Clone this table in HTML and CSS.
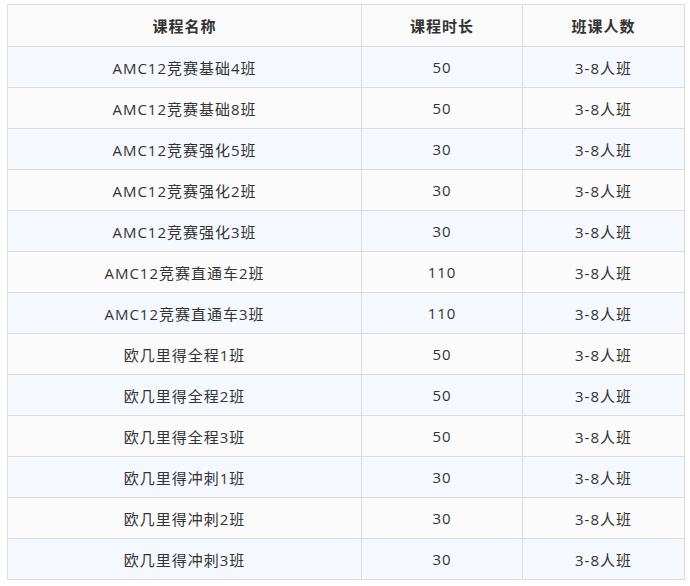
FILE: index.html
```html
<!DOCTYPE html>
<html lang="zh">
<head>
<meta charset="utf-8">
<link rel="stylesheet" href="styles.css">
</head>
<body>
<table class="course-table">
  <thead>
    <tr><th class="col-name">课程名称</th><th class="col-len">课程时长</th><th class="col-size">班课人数</th></tr>
  </thead>
  <tbody>
    <tr><td>AMC12竞赛基础4班</td><td>50</td><td>3-8人班</td></tr>
    <tr><td>AMC12竞赛基础8班</td><td>50</td><td>3-8人班</td></tr>
    <tr><td>AMC12竞赛强化5班</td><td>30</td><td>3-8人班</td></tr>
    <tr><td>AMC12竞赛强化2班</td><td>30</td><td>3-8人班</td></tr>
    <tr><td>AMC12竞赛强化3班</td><td>30</td><td>3-8人班</td></tr>
    <tr><td>AMC12竞赛直通车2班</td><td>110</td><td>3-8人班</td></tr>
    <tr><td>AMC12竞赛直通车3班</td><td>110</td><td>3-8人班</td></tr>
    <tr><td>欧几里得全程1班</td><td>50</td><td>3-8人班</td></tr>
    <tr><td>欧几里得全程2班</td><td>50</td><td>3-8人班</td></tr>
    <tr><td>欧几里得全程3班</td><td>50</td><td>3-8人班</td></tr>
    <tr><td>欧几里得冲刺1班</td><td>30</td><td>3-8人班</td></tr>
    <tr><td>欧几里得冲刺2班</td><td>30</td><td>3-8人班</td></tr>
    <tr><td>欧几里得冲刺3班</td><td>30</td><td>3-8人班</td></tr>
  </tbody>
</table>
</body>
</html>
```

FILE: styles.css
```css
html, body {
  margin: 0;
  padding: 0;
  background: #ffffff;
}
body {
  padding: 4px 7px;
  font-family: "Open Sans", "Noto Sans CJK SC", sans-serif;
  font-size: 15px;
  color: #333333;
}
.course-table {
  width: 676px;
  border-collapse: collapse;
  table-layout: fixed;
}
.course-table th,
.course-table td {
  border: 1px solid #dddddd;
  text-align: center;
  vertical-align: middle;
  letter-spacing: 1px;
  padding: 0;
}
.course-table th {
  height: 41px;
  font-weight: bold;
  background: #fafafa;
  color: #333333;
}
.course-table td {
  height: 40px;
}
.col-name { width: 353px; }
.col-len { width: 160px; }
.col-size { width: 161px; }
.course-table tbody tr:nth-child(odd) td {
  background: #f5f9ff;
}
.course-table tbody tr:nth-child(even) td {
  background: #fbfbfb;
}
```
